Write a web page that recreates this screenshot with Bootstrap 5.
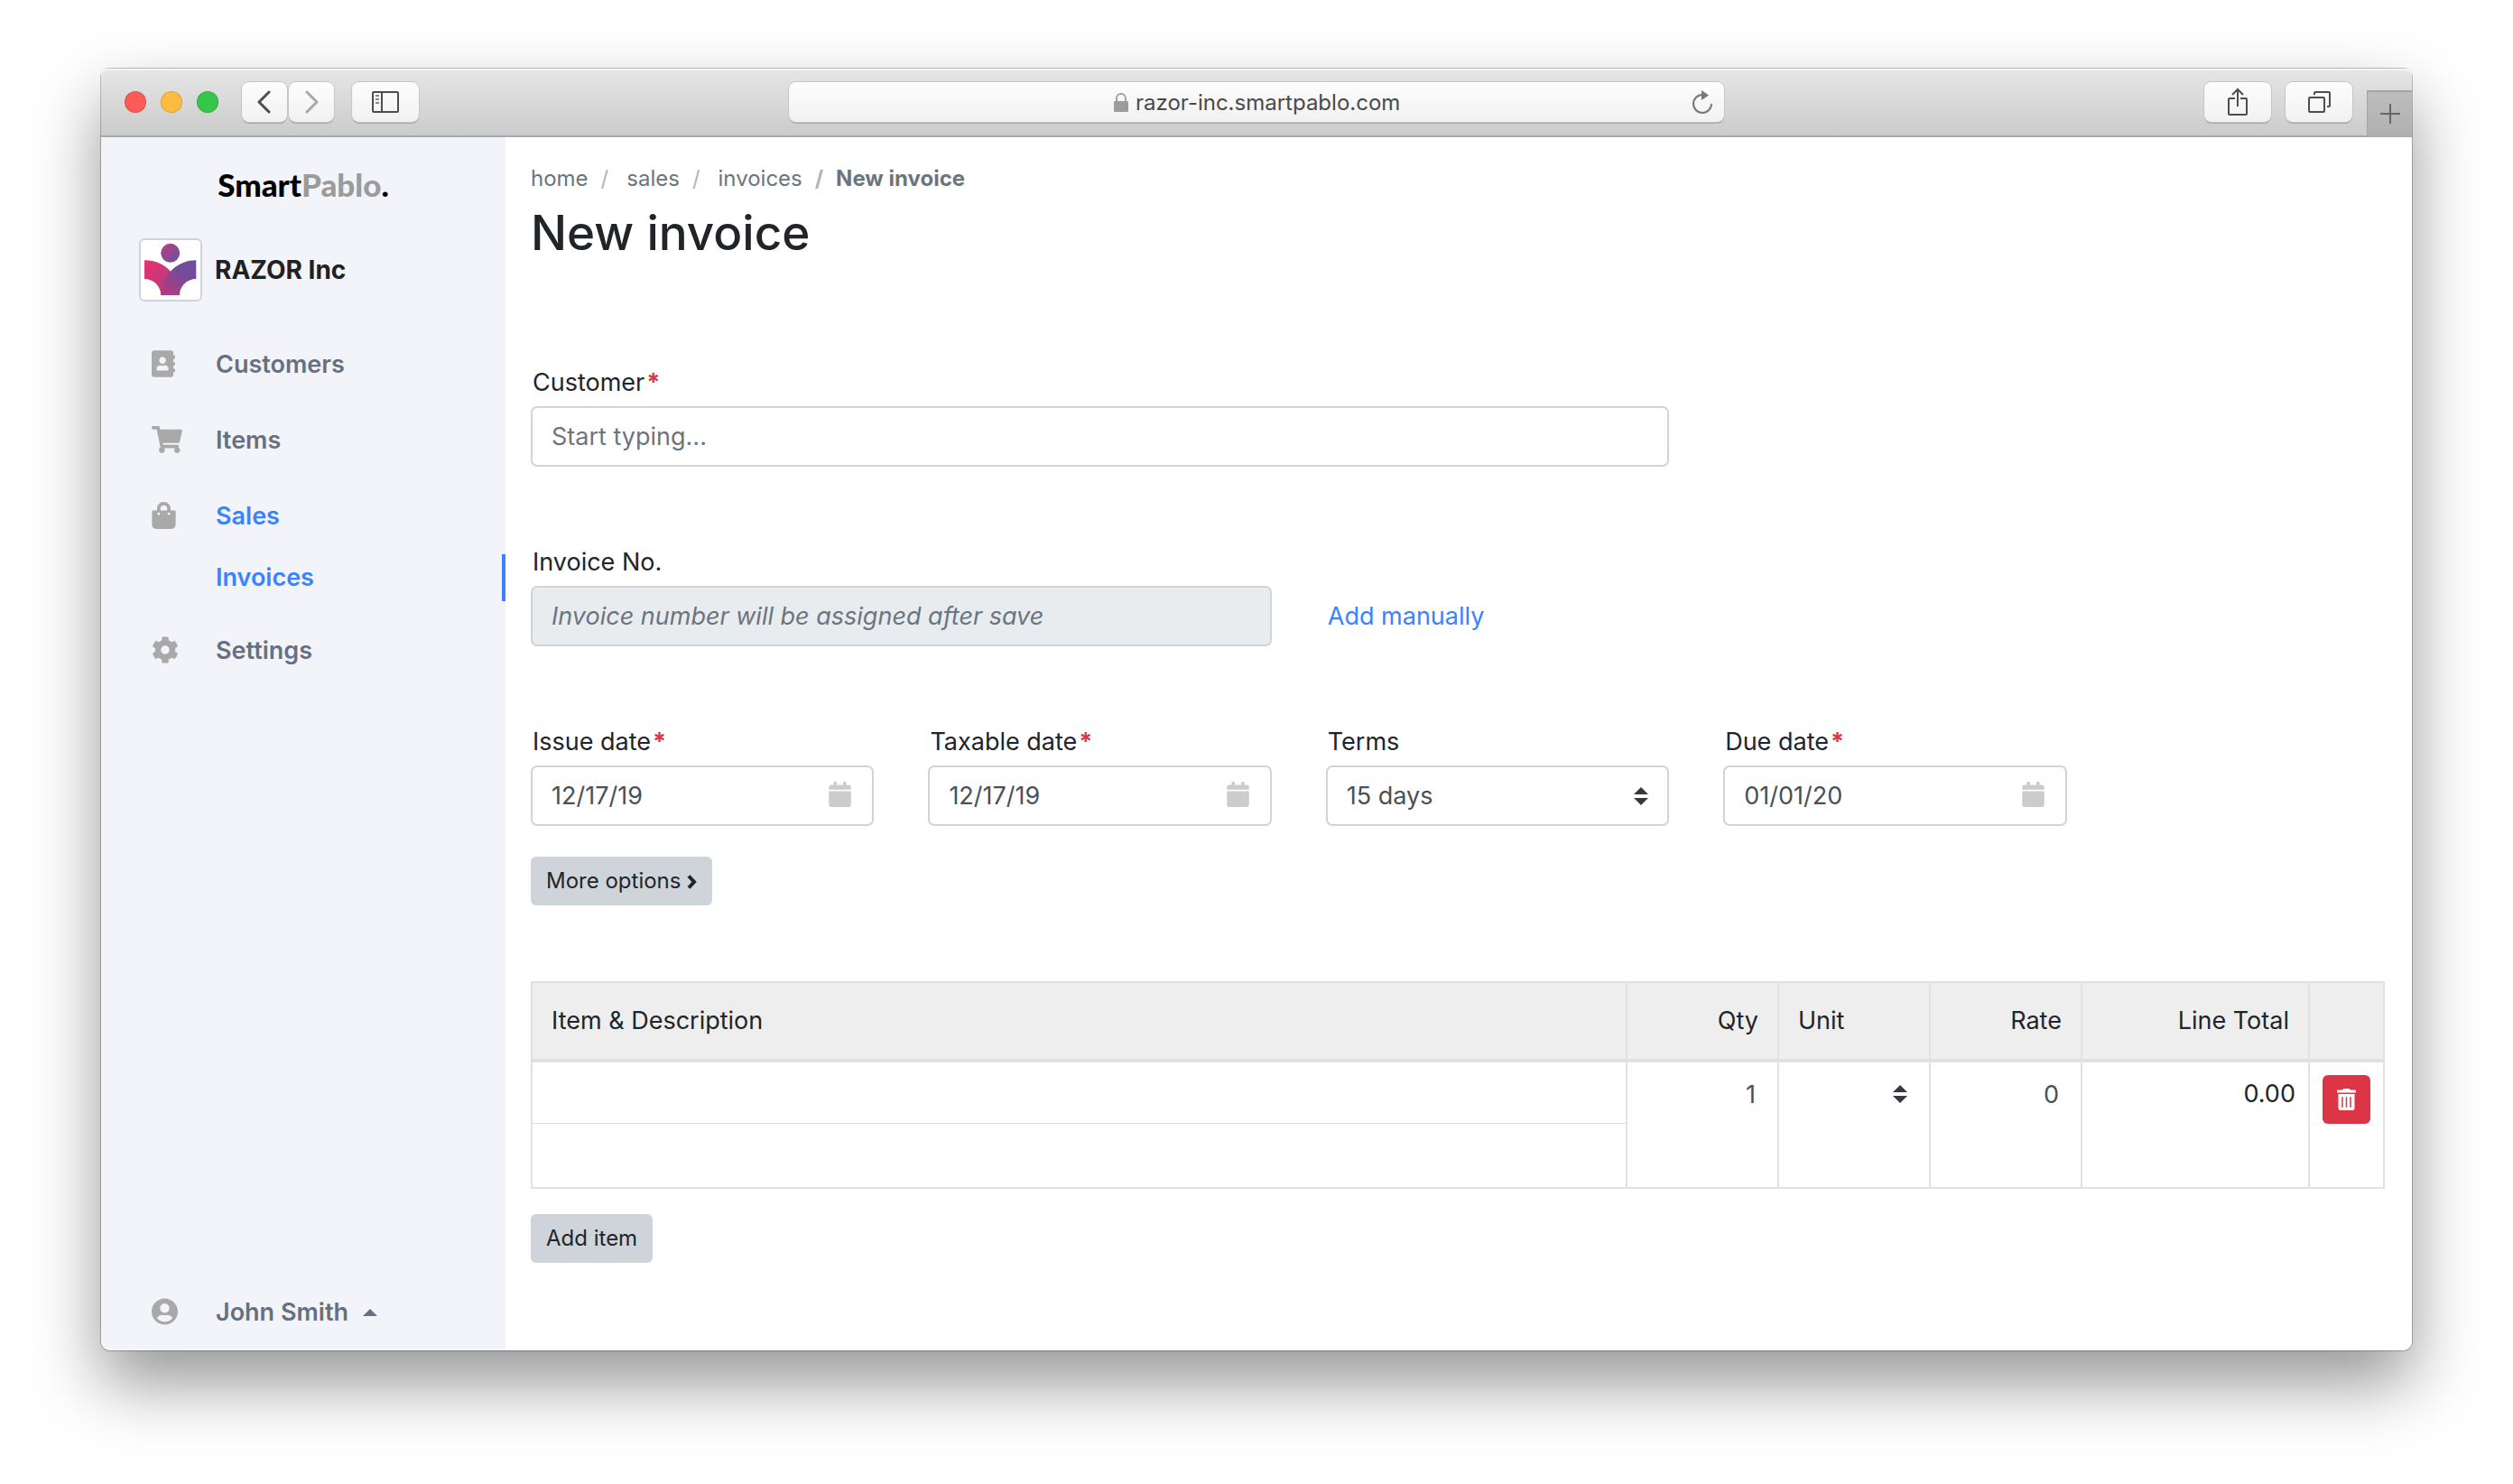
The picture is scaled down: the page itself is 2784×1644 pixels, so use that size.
<!DOCTYPE html>
<html lang="en">
<head>
<meta charset="utf-8">
<meta name="viewport" content="width=device-width, initial-scale=1">
<title>New invoice</title>
<link href="https://cdn.jsdelivr.net/npm/bootstrap@5.3.0/dist/css/bootstrap.min.css" rel="stylesheet">
<style>
  body { font-family: Inter, "Liberation Sans", sans-serif; font-size: 27px; line-height: 40px; color: #212529; background: #fff; padding: 76px 112px 148px; }
  .app-window { border-radius: 10px; box-shadow: 0 0 0 1px rgba(0,0,0,.24), 0 36px 76px rgba(0,0,0,.42); }

  /* Browser chrome */
  .chrome { display: grid; grid-template-columns: 1fr 40.5% 1fr; height: 76px; background: linear-gradient(#e6e6e6, #cbcbcb); border-bottom: 2px solid #a9a9a9; box-shadow: inset 0 2px 0 #f4f4f4; }
  .light { width: 24px; height: 24px; border-radius: 50%; border: 1px solid rgba(0,0,0,.14); }
  .light-close { background: #fc5b57; }
  .light-min { background: #fdbc40; }
  .light-max { background: #34c84a; }
  .chrome-btn { height: 44px; border: 0; border-radius: 8px; background: linear-gradient(#fdfdfd, #f1f1f1); box-shadow: 0 0 0 1px #c6c6c6, 0 2px 0 #a6a6a6; color: #555; padding: 0; display: flex; align-items: center; justify-content: center; }
  .chrome-btn.narrow { width: 50px; }
  .chrome-btn.wide { width: 74px; }
  .chrome-left { padding-left: 26px; }
  .lights { gap: 16px; margin-right: 26px; }
  .nav-pair { gap: 2px; margin-right: 20px; }
  .address { height: 44px; border-radius: 8px; background: linear-gradient(#fdfdfd, #f1f1f1); box-shadow: 0 0 0 1px #c6c6c6, 0 2px 0 #a6a6a6; padding: 0 12px; }
  .address label { margin-left: 24px; }
  .address input { width: 292px; border: 0; background: none; font-size: 24px; line-height: 36px; color: #4a4a4a; padding: 2px 0 0; outline: 0; }
  .plain-btn { border: 0; background: none; padding: 0; line-height: 1; }
  .plain-btn svg { display: block; }
  .new-tab { width: 50px; height: 50px; border: 0; border-top: 2px solid #a4a4a4; border-left: 1px solid #a4a4a4; background: linear-gradient(#bdbdbd, #b0b0b0); padding: 0; color: #666; }

  /* Sidebar */
  .side { width: 448px; background: #f3f4f9; border-bottom-left-radius: 10px; padding-top: 28px; }
  .brand { font-family: Lato, sans-serif; font-weight: 900; font-size: 35px; line-height: 48px; color: #000; text-align: center; text-decoration: none; margin-bottom: 36px; }
  .brand span { color: #9b9b9b; }
  .company { padding-left: 42px; gap: 14px; margin-bottom: 28px; font-size: 28px; font-weight: 700; color: #212121; }
  .company-logo { width: 70px; height: 70px; border: 2px solid #ced4da; border-radius: 6px; background: #fff; }
  .side-link { height: 84px; padding-left: 56px; font-weight: 600; color: #667080; text-decoration: none; }
  .side-link svg { fill: #a9a9a9; }
  .icon-slot { width: 71px; line-height: 0; padding-bottom: 2px; }
  .side-link.active, .sub-link { color: #3b82fd; }
  .sub-link { height: 52px; padding-left: 127px; font-weight: 600; text-decoration: none; border-right: 4px solid #3b82fd; margin-bottom: 13px; }

  /* Page */
  .page { padding: 28px 30px 92px 28px; border-bottom-right-radius: 10px; background: #fff; }
  .breadcrumb { font-size: 24px; line-height: 36px; margin-bottom: 10px; --bs-breadcrumb-item-padding-x: 14px; --bs-breadcrumb-divider-color: #adb5bd; }
  .breadcrumb a { color: #6c757d; text-decoration: none; }
  .breadcrumb-item:nth-child(2)::before, .breadcrumb-item:nth-child(3)::before { padding-right: 20px; }
  .breadcrumb-item.active { color: #6c757d; font-weight: 700; }
  h1.page-title { font-size: 53px; line-height: 64px; font-weight: 500; margin-bottom: 114px; }
  .fields { --bs-gutter-x: 60px; }
  .field-row { margin-bottom: 86px; }
  .form-label { margin-bottom: 6px; padding-left: 2px; display: block; }
  .req { color: #dc3545; font-weight: 700; padding-left: 2px; }
  .form-control, .form-select { height: 67px; border: 2px solid #ced4da; border-radius: 7px; font-size: 27px; line-height: 40px; padding: 0 21px; color: #495057; }
  .form-control::placeholder { color: #6c757d; }
  .form-control:disabled { background: #e9ecef; }
  .form-control:disabled::placeholder { font-style: italic; }
  .form-select { background: #fff url("data:image/svg+xml,%3Csvg xmlns='http://www.w3.org/2000/svg' viewBox='0 0 4 5'%3E%3Cpath fill='%23343a40' d='M2 0L0 2h4zm0 5L0 3h4z'/%3E%3C/svg%3E") no-repeat right 21px center / 16px 20px; }
  .cal { position: absolute; right: 25px; top: 18px; fill: #ccc; }
  .link-blue { color: #3b82fd; text-decoration: none; line-height: 67px; padding-left: 2px; }
  .btn-gray { background: #ced4da; color: #212529; border: 0; border-radius: 6px; font-size: 24px; line-height: 36px; padding: 9px 17px; }
  .more { margin-top: 34px; margin-bottom: 84px; }

  /* Invoice lines */
  .lines { table-layout: fixed; width: 100%; border: 2px solid #dee2e6; margin-bottom: 28px; }
  .lines th { height: 87px; background: #eee; font-weight: 400; padding: 0 21px; vertical-align: middle; border-right: 2px solid #dee2e6; border-bottom: 4px solid #dee2e6; }
  .lines td { padding: 0; vertical-align: top; border-right: 2px solid #dee2e6; }
  .lines .form-control, .lines .form-select { height: 70px; border: 0; border-radius: 0; background-color: transparent; }
  .lines .form-control { padding: 0 24px; }
  .lines .form-control.item-name { height: 68px; border-bottom: 1px solid #dcdfe2; }
  .lines .form-select { background-position: right 24px center; }
  .c-num { width: 168px; }
  .c-total { width: 252px; }
  .c-del { width: 83px; }
  .lines td.total { padding: 15px 14px 0; }
  .lines td.del { padding: 14px 0 0 14px; }
  .btn-del { width: 53px; height: 54px; padding: 0; border-radius: 6px; background: #dc3545; border: 0; display: flex; align-items: center; justify-content: center; }
</style>
</head>
<body class="d-flex flex-column min-vh-100">
<div class="app-window d-flex flex-column flex-grow-1">

  <header class="chrome rounded-top-3">
    <div class="chrome-left d-flex align-items-center">
      <div class="lights d-flex">
        <span class="light light-close"></span>
        <span class="light light-min"></span>
        <span class="light light-max"></span>
      </div>
      <div class="nav-pair d-flex">
        <button class="chrome-btn narrow" aria-label="Back"><svg width="16" height="26" viewBox="0 0 16 26" fill="none" stroke="#4d4d4d" stroke-width="3" stroke-linecap="round" stroke-linejoin="round"><path d="M13 2 2 13l11 11"/></svg></button>
        <button class="chrome-btn narrow" aria-label="Forward"><svg width="16" height="26" viewBox="0 0 16 26" fill="none" stroke="#a9a9a9" stroke-width="3" stroke-linecap="round" stroke-linejoin="round"><path d="M3 2l11 11L3 24"/></svg></button>
      </div>
      <button class="chrome-btn wide" aria-label="Sidebar"><svg width="30" height="24" viewBox="0 0 30 24" fill="none" stroke="#4d4d4d" stroke-width="2"><rect x="1" y="1" width="28" height="22" rx="1"/><path d="M11 1v22"/><path d="M4 5h4M4 9h4M4 13h4" stroke="#888"/></svg></button>
    </div>
    <div class="d-flex align-items-center">
      <div class="address d-flex align-items-center justify-content-between w-100">
        <span></span>
        <label class="d-flex align-items-center gap-2">
          <svg width="16" height="21" viewBox="0 0 16 21"><path d="M3 9V6a5 5 0 0 1 10 0v3" fill="none" stroke="#a0a0a0" stroke-width="2"/><rect y="9" width="16" height="12" rx="1" fill="#9c9c9c"/></svg>
          <input type="text" value="razor-inc.smartpablo.com" aria-label="Address">
        </label>
        <button class="plain-btn" aria-label="Reload"><svg width="24" height="27" viewBox="0 0 24 27"><path d="M12 5a10 10 0 1 0 10 10" fill="none" stroke="#777" stroke-width="2"/><path d="M11 0l8 5.500-8 5.500z" fill="#777"/></svg></button>
      </div>
    </div>
    <div class="d-flex align-items-center justify-content-end gap-3">
      <button class="chrome-btn wide" aria-label="Share"><svg width="24" height="32" viewBox="0 0 24 32" fill="none" stroke="#4d4d4d" stroke-width="2"><path d="M9 12H3a1 1 0 0 0-1 1v16a1 1 0 0 0 1 1h18a1 1 0 0 0 1-1V13a1 1 0 0 0-1-1h-6M12 21V2M6 8l6-6 6 6"/></svg></button>
      <button class="chrome-btn wide" aria-label="Tabs"><svg width="26" height="26" viewBox="0 0 26 26" fill="none" stroke="#4d4d4d" stroke-width="2"><rect x="2" y="8" width="17" height="16" rx="1"/><path d="M8 5V3a1 1 0 0 1 1-1h15a1 1 0 0 1 1 1v14a1 1 0 0 1-1 1h-2"/></svg></button>
      <button class="new-tab align-self-end" aria-label="New tab"><svg class="d-block mx-auto" width="22" height="22" viewBox="0 0 22 22" stroke="#666" stroke-width="2"><path d="M11 0v22M0 11h22"/></svg></button>
    </div>
  </header>

  <div class="d-flex flex-grow-1">
    <nav class="side d-flex flex-column flex-shrink-0">
      <a class="brand" href="#">Smart<span>Pablo</span>.</a>
      <div class="company d-flex align-items-center">
        <svg class="company-logo" viewBox="2 2 66 66" aria-hidden="true">
          <defs>
            <linearGradient id="lg1" gradientUnits="userSpaceOnUse" x1="6" y1="30" x2="40" y2="60"><stop offset="0" stop-color="#e8316e"/><stop offset="1" stop-color="#a83d84"/></linearGradient>
            <linearGradient id="lg2" gradientUnits="userSpaceOnUse" x1="60" y1="28" x2="34" y2="62"><stop offset="0" stop-color="#6e4fa2"/><stop offset=".35" stop-color="#744b9c"/><stop offset="1" stop-color="#b03b80"/></linearGradient>
            <linearGradient id="lg3" x1="0" y1="0" x2="1" y2="1"><stop offset="0" stop-color="#b83f7c"/><stop offset="1" stop-color="#6a51a6"/></linearGradient>
          </defs>
          <circle cx="34.700" cy="16.300" r="10.500" fill="url(#lg3)"/>
          <path d="M6 24.300C18 24.300 28 29 34.700 36.300L45 63H24.300C24.300 53 16 45 6 45z" fill="url(#lg1)"/>
          <path d="M63.300 24.300V45C53 45 45 53 45 63H24.300C24 60 25 57 26.500 54 29 38 44 24.300 63.300 24.300z" fill="url(#lg2)"/>
        </svg>
        <span>RAZOR Inc</span>
      </div>
      <a class="side-link d-flex align-items-center" href="#"><span class="icon-slot"><svg width="26" height="30" viewBox="0 0 448 512"><path d="M436 160c6.600 0 12-5.400 12-12v-40c0-6.600-5.400-12-12-12h-20V48c0-26.500-21.500-48-48-48H48C21.500 0 0 21.500 0 48v416c0 26.500 21.500 48 48 48h320c26.500 0 48-21.500 48-48v-48h20c6.600 0 12-5.400 12-12v-40c0-6.600-5.400-12-12-12h-20v-64h20c6.600 0 12-5.400 12-12v-40c0-6.600-5.400-12-12-12h-20v-64h20zm-228-32c35.300 0 64 28.700 64 64s-28.700 64-64 64-64-28.700-64-64 28.700-64 64-64zm112 236.800c0 10.600-10 19.200-22.400 19.200H118.400C106 384 96 375.400 96 364.800v-19.200c0-31.800 30.100-57.600 67.200-57.600h5c12.300 5.100 25.700 8 39.800 8s27.600-2.900 39.800-8h5c37.100 0 67.200 25.800 67.200 57.600v19.200z"/></svg></span>Customers</a>
      <a class="side-link d-flex align-items-center" href="#"><span class="icon-slot"><svg width="34" height="30" viewBox="0 0 576 512"><path d="M528.120 301.319l47.273-208C578.806 78.301 567.391 64 551.990 64H159.208l-9.166-44.810C147.758 8.021 137.930 0 126.529 0H24C10.745 0 0 10.745 0 24v16c0 13.255 10.745 24 24 24h69.883l70.248 343.435C147.325 417.100 136 435.222 136 456c0 30.928 25.072 56 56 56s56-25.072 56-56c0-15.674-6.447-29.835-16.824-40h209.647C430.447 426.165 424 440.326 424 456c0 30.928 25.072 56 56 56s56-25.072 56-56c0-22.172-12.888-41.332-31.579-50.405l5.517-24.276c3.413-15.018-8.002-29.319-23.403-29.319H218.117l-6.545-32h293.145c11.206 0 20.920-7.754 23.403-18.681z"/></svg></span>Items</a>
      <a class="side-link active d-flex align-items-center" href="#"><span class="icon-slot"><svg width="27" height="30" viewBox="0 0 448 512"><path d="M352 160v-32C352 57.420 294.579 0 224 0 153.420 0 96 57.420 96 128v32H0v272c0 44.183 35.817 80 80 80h288c44.183 0 80-35.817 80-80V160h-96zm-192-32c0-35.290 28.710-64 64-64s64 28.710 64 64v32H160v-32zm160 120c-13.255 0-24-10.745-24-24s10.745-24 24-24 24 10.745 24 24-10.745 24-24 24zm-192 0c-13.255 0-24-10.745-24-24s10.745-24 24-24 24 10.745 24 24-10.745 24-24 24z"/></svg></span>Sales</a>
      <a class="sub-link d-flex align-items-center" href="#">Invoices</a>
      <a class="side-link d-flex align-items-center" href="#"><span class="icon-slot"><svg width="30" height="30" viewBox="0 0 512 512"><path d="M487.400 315.700l-42.600-24.600c4.300-23.200 4.300-47 0-70.200l42.600-24.600c4.900-2.800 7.100-8.600 5.500-14-11.100-35.600-30-67.800-54.700-94.600-3.800-4.100-10-5.100-14.800-2.300L380.800 110c-17.900-15.400-38.500-27.300-60.800-35.100V25.800c0-5.600-3.900-10.500-9.400-11.700-36.700-8.200-74.300-7.800-109.200 0-5.500 1.200-9.400 6.100-9.400 11.700V75c-22.200 7.900-42.800 19.800-60.800 35.100L88.700 85.500c-4.900-2.800-11-1.900-14.800 2.300-24.700 26.700-43.600 58.900-54.700 94.600-1.700 5.400.6 11.200 5.500 14L67.300 221c-4.300 23.200-4.300 47 0 70.200l-42.600 24.600c-4.900 2.800-7.100 8.600-5.500 14 11.100 35.600 30 67.800 54.700 94.600 3.800 4.100 10 5.100 14.800 2.300l42.600-24.600c17.900 15.400 38.500 27.300 60.800 35.100v49.200c0 5.600 3.900 10.500 9.400 11.700 36.700 8.200 74.300 7.800 109.200 0 5.500-1.200 9.400-6.100 9.400-11.700v-49.200c22.200-7.900 42.800-19.800 60.800-35.100l42.600 24.600c4.900 2.800 11 1.900 14.800-2.300 24.700-26.700 43.600-58.900 54.700-94.600 1.500-5.500-.7-11.300-5.600-14.100zM256 336c-44.100 0-80-35.900-80-80s35.900-80 80-80 80 35.900 80 80-35.900 80-80 80z"/></svg></span>Settings</a>
      <a class="side-link d-flex align-items-center mt-auto" href="#"><span class="icon-slot"><svg width="29" height="30" viewBox="0 0 496 512"><path d="M248 8C111 8 0 119 0 256s111 248 248 248 248-111 248-248S385 8 248 8zm0 96c48.600 0 88 39.400 88 88s-39.400 88-88 88-88-39.400-88-88 39.400-88 88-88zm0 344c-58.700 0-111.300-26.600-146.500-68.200 18.800-35.400 55.600-59.800 98.500-59.800 2.400 0 4.800.4 7.100 1.100 13 4.200 26.600 6.900 40.900 6.900 14.300 0 28-2.700 40.900-6.900 2.300-.7 4.700-1.100 7.100-1.100 42.900 0 79.700 24.400 98.500 59.800C359.300 421.400 306.700 448 248 448z"/></svg></span>John Smith<svg class="ms-3" width="16" height="8" viewBox="0 0 16 8"><path d="M8 0l8 8H0z" fill="#667080"/></svg></a>
    </nav>

    <main class="page flex-grow-1">
      <ol class="breadcrumb">
        <li class="breadcrumb-item"><a href="#">home</a></li>
        <li class="breadcrumb-item"><a href="#">sales</a></li>
        <li class="breadcrumb-item"><a href="#">invoices</a></li>
        <li class="breadcrumb-item active" aria-current="page">New invoice</li>
      </ol>
      <h1 class="page-title">New invoice</h1>

      <form>
        <div class="row fields">
          <div class="col-10">
            <div class="row fields field-row">
              <div class="col-9">
                <label class="form-label" for="customer">Customer<span class="req">*</span></label>
                <input class="form-control" id="customer" type="text" placeholder="Start typing...">
              </div>
            </div>
            <div class="row fields field-row align-items-end">
              <div class="col-6">
                <label class="form-label" for="number">Invoice No.</label>
                <input class="form-control" id="number" type="text" placeholder="Invoice number will be assigned after save" disabled>
              </div>
              <div class="col-3"><a class="link-blue d-block" href="#">Add manually</a></div>
            </div>
            <div class="row fields">
              <div class="col-3">
                <label class="form-label" for="issue">Issue date<span class="req">*</span></label>
                <div class="position-relative"><input class="form-control" id="issue" type="text" value="12/17/19"><svg class="cal" width="25" height="28" viewBox="0 0 448 512"><path d="M12 192h424c6.600 0 12 5.400 12 12v260c0 26.500-21.500 48-48 48H48c-26.500 0-48-21.500-48-48V204c0-6.600 5.400-12 12-12zm436-44v-36c0-26.500-21.500-48-48-48h-48V12c0-6.600-5.400-12-12-12h-40c-6.600 0-12 5.400-12 12v52H160V12c0-6.600-5.400-12-12-12h-40c-6.600 0-12 5.400-12 12v52H48C21.500 64 0 85.500 0 112v36c0 6.600 5.400 12 12 12h424c6.600 0 12-5.400 12-12z"/></svg></div>
              </div>
              <div class="col-3">
                <label class="form-label" for="taxable">Taxable date<span class="req">*</span></label>
                <div class="position-relative"><input class="form-control" id="taxable" type="text" value="12/17/19"><svg class="cal" width="25" height="28" viewBox="0 0 448 512"><path d="M12 192h424c6.600 0 12 5.400 12 12v260c0 26.500-21.500 48-48 48H48c-26.500 0-48-21.500-48-48V204c0-6.600 5.400-12 12-12zm436-44v-36c0-26.500-21.500-48-48-48h-48V12c0-6.600-5.400-12-12-12h-40c-6.600 0-12 5.400-12 12v52H160V12c0-6.600-5.400-12-12-12h-40c-6.600 0-12 5.400-12 12v52H48C21.500 64 0 85.500 0 112v36c0 6.600 5.400 12 12 12h424c6.600 0 12-5.400 12-12z"/></svg></div>
              </div>
              <div class="col-3">
                <label class="form-label" for="terms">Terms</label>
                <select class="form-select" id="terms"><option>15 days</option></select>
              </div>
              <div class="col-3">
                <label class="form-label" for="due">Due date<span class="req">*</span></label>
                <div class="position-relative"><input class="form-control" id="due" type="text" value="01/01/20"><svg class="cal" width="25" height="28" viewBox="0 0 448 512"><path d="M12 192h424c6.600 0 12 5.400 12 12v260c0 26.500-21.500 48-48 48H48c-26.500 0-48-21.500-48-48V204c0-6.600 5.400-12 12-12zm436-44v-36c0-26.500-21.500-48-48-48h-48V12c0-6.600-5.400-12-12-12h-40c-6.600 0-12 5.400-12 12v52H160V12c0-6.600-5.400-12-12-12h-40c-6.600 0-12 5.400-12 12v52H48C21.500 64 0 85.500 0 112v36c0 6.600 5.400 12 12 12h424c6.600 0 12-5.400 12-12z"/></svg></div>
              </div>
            </div>
          </div>
        </div>

        <div class="more d-flex">
          <button type="button" class="btn btn-gray">More options <svg width="11" height="16" viewBox="0 0 11 16" fill="none" stroke="#212529" stroke-width="4"><path d="M2 1.500 8 8l-6 6.500"/></svg></button>
        </div>

        <table class="lines">
          <colgroup><col><col class="c-num"><col class="c-num"><col class="c-num"><col class="c-total"><col class="c-del"></colgroup>
          <thead>
            <tr><th>Item &amp; Description</th><th class="text-end">Qty</th><th>Unit</th><th class="text-end">Rate</th><th class="text-end">Line Total</th><th></th></tr>
          </thead>
          <tbody>
            <tr>
              <td>
                <input class="form-control item-name" type="text" aria-label="Item">
                <input class="form-control" type="text" aria-label="Description">
              </td>
              <td><input class="form-control text-end" type="text" value="1" aria-label="Quantity"></td>
              <td><select class="form-select" aria-label="Unit"><option></option></select></td>
              <td><input class="form-control text-end" type="text" value="0" aria-label="Rate"></td>
              <td class="total text-end">0.00</td>
              <td class="del"><button type="button" class="btn btn-danger btn-del" aria-label="Delete"><svg width="21" height="24" viewBox="0 0 448 512" fill="#fff"><path d="M32 464a48 48 0 0 0 48 48h288a48 48 0 0 0 48-48V128H32zm272-256a16 16 0 0 1 32 0v224a16 16 0 0 1-32 0zm-96 0a16 16 0 0 1 32 0v224a16 16 0 0 1-32 0zm-96 0a16 16 0 0 1 32 0v224a16 16 0 0 1-32 0zM432 32H312l-9.400-18.700A24 24 0 0 0 281.100 0H166.800a23.720 23.720 0 0 0-21.400 13.300L136 32H16A16 16 0 0 0 0 48v32a16 16 0 0 0 16 16h416a16 16 0 0 0 16-16V48a16 16 0 0 0-16-16z"/></svg></button></td>
            </tr>
          </tbody>
        </table>
        <button type="button" class="btn btn-gray">Add item</button>
      </form>
    </main>
  </div>
</div>
<script src="https://cdn.jsdelivr.net/npm/bootstrap@5.3.0/dist/js/bootstrap.bundle.min.js"></script>
</body>
</html>
